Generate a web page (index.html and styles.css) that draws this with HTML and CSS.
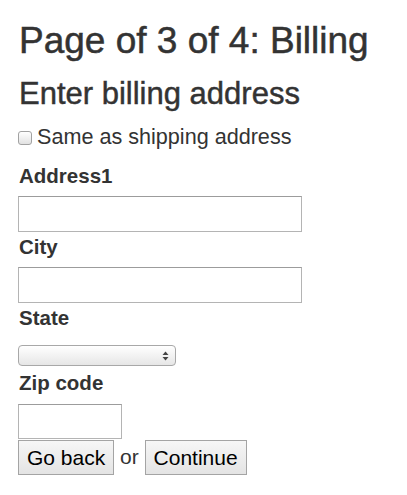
FILE: index.html
```html
<!DOCTYPE html>
<html lang="en">
<head>
<meta charset="utf-8">
<title>Billing</title>
<link rel="stylesheet" href="styles.css">
</head>
<body>
<h1 class="page-title">Page of 3 of 4: Billing</h1>
<form class="billing-form">
  <h2 class="section-title">Enter billing address</h2>
  <label class="check-row"><input type="checkbox" class="check"><span>Same as shipping address</span></label>
  <label class="field-label first" for="address1">Address1</label>
  <input type="text" id="address1" class="text-input wide">
  <label class="field-label" for="city">City</label>
  <input type="text" id="city" class="text-input wide">
  <label class="field-label" for="state">State</label>
  <div class="select-wrap">
    <select id="state" class="select"><option></option></select>
    <svg class="select-arrows" width="7" height="10" viewBox="0 0 7 10" aria-hidden="true">
      <path d="M3.5 0.5 L6.5 4 L0.5 4 Z" fill="#444"/>
      <path d="M0.5 6 L6.5 6 L3.5 9.5 Z" fill="#444"/>
    </svg>
  </div>
  <label class="field-label after-select" for="zip">Zip code</label>
  <input type="text" id="zip" class="text-input zip">
  <div class="actions"><button type="button" class="btn">Go back</button> or <button type="submit" class="btn">Continue</button></div>
</form>
</body>
</html>
```

FILE: styles.css
```css
html, body {
  margin: 0;
  background: #ffffff;
}
body {
  padding: 21px 18px 0 18px;
  font-family: "Liberation Sans", Arial, Helvetica, sans-serif;
  color: #333333;
}
.page-title {
  margin: 0;
  font-size: 37px;
  line-height: 40px;
  font-weight: normal;
  padding-left: 1px;
  -webkit-text-stroke: 0.5px #333333;
}
.billing-form {
  margin: 0;
}
.section-title {
  margin: 16px 0 0 0;
  font-size: 31px;
  line-height: 34px;
  font-weight: normal;
  padding-left: 1px;
  -webkit-text-stroke: 0.45px #333333;
}
.check-row {
  display: flex;
  align-items: center;
  margin-top: 14px;
  height: 24px;
  font-size: 21.6px;
  line-height: 24px;
}
.check {
  appearance: none;
  -webkit-appearance: none;
  width: 14px;
  height: 14px;
  margin: 2px 5px 0 0;
  border: 1px solid #a2a2a2;
  border-radius: 3px;
  background: linear-gradient(#ffffff, #e2e2e2);
  box-sizing: border-box;
  flex: none;
}
.field-label {
  display: block;
  margin: 3px 0 8px 0;
  padding-left: 1px;
  font-size: 20.5px;
  line-height: 24px;
  font-weight: bold;
}
.field-label.first {
  margin-top: 15px;
}
.field-label.after-select {
  margin-top: 5px;
  margin-bottom: 9px;
}
.text-input {
  display: block;
  box-sizing: border-box;
  margin: 0;
  padding: 2px 4px;
  border: 1px solid #b4b4b4;
  border-top-color: #9c9c9c;
  background: #ffffff;
  font-family: inherit;
  font-size: 16px;
  outline: none;
}
.text-input.wide {
  width: 284px;
  height: 36px;
}
.text-input.zip {
  width: 104px;
  height: 35px;
}
.select-wrap {
  position: relative;
  width: 158px;
  height: 21px;
  margin-top: 15px;
}
.select {
  appearance: none;
  -webkit-appearance: none;
  display: block;
  box-sizing: border-box;
  width: 158px;
  height: 21px;
  margin: 0;
  border: 1px solid #a8a8a8;
  border-radius: 4px;
  background: linear-gradient(#ffffff, #e6e6e6);
  font-family: inherit;
  font-size: 12px;
}
.select-arrows {
  position: absolute;
  right: 7px;
  top: 6px;
}
.actions {
  font-size: 21px;
  line-height: 34px;
  margin-top: 1px;
}
.btn {
  box-sizing: border-box;
  height: 35px;
  margin: 0;
  padding: 0 8px;
  border: 1px solid #a4a4a4;
  border-radius: 0;
  background: linear-gradient(#f6f6f6, #e4e4e4);
  color: #000000;
  font-family: inherit;
  font-size: 21px;
  line-height: 33px;
  vertical-align: top;
}
```
